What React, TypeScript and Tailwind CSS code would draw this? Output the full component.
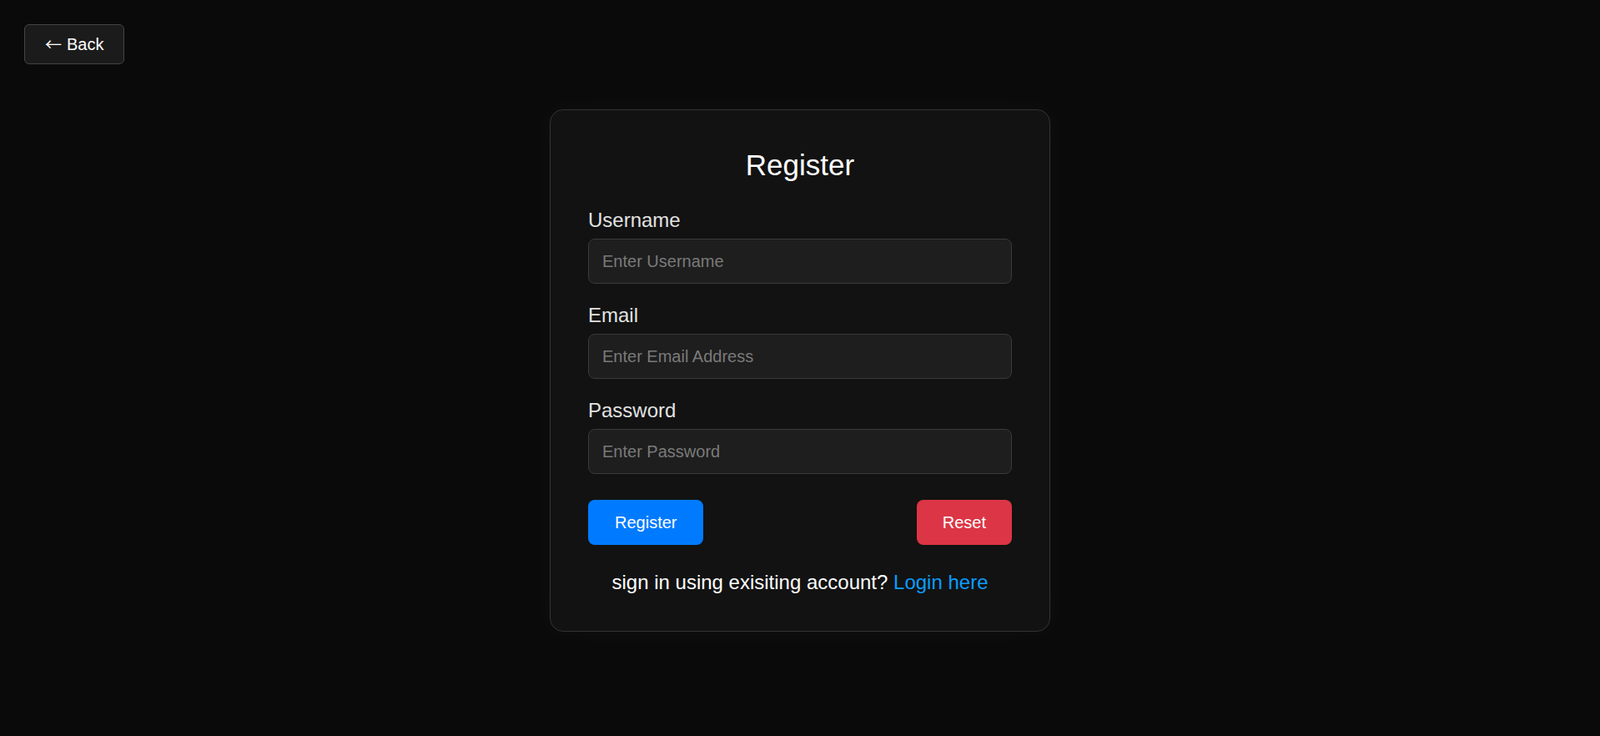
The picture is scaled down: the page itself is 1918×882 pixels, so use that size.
import { useState } from "react";

const fieldList = [
  { id: "username", label: "Username", type: "text", placeholder: "Enter Username" },
  { id: "email", label: "Email", type: "email", placeholder: "Enter Email Address" },
  { id: "password", label: "Password", type: "password", placeholder: "Enter Password" },
];

export default function App() {
  const [values, setValues] = useState<Record<string, string>>({ username: "", email: "", password: "" });

  const reset = () => setValues({ username: "", email: "", password: "" });

  return (
    <div className="relative min-h-screen w-full bg-[#0a0a0a] flex items-center justify-center pt-[6px] font-['Liberation_Sans',Arial,sans-serif]">
      <button
        type="button"
        className="absolute left-[29px] top-[29px] h-[48px] px-6 rounded-[6px] border border-[#444] bg-[#1b1b1b] text-white text-[20px] leading-[23px] flex items-center"
      >
        <span className="font-['Noto_Sans_CJK_SC',sans-serif] text-[20px] leading-[20px]">←</span>
        <span className="ml-[6px]">Back</span>
      </button>

      <div className="w-[600px] rounded-[16px] border border-[#333] bg-[#121212] p-[45px] shadow-[0_0_30px_rgba(255,255,255,0.035)]">
        <h2 className="text-center text-white text-[35px] leading-[40px] mt-[1px] mb-[32px]">Register</h2>

        <form onSubmit={(e) => e.preventDefault()} className="flex flex-col">
          {fieldList.map((f, i) => (
            <div key={f.id} className={i < fieldList.length - 1 ? "mb-[24px]" : ""}>
              <label htmlFor={f.id} className="block text-[24px] leading-[28px] text-[#e2e2e2] mb-[8px]">
                {f.label}
              </label>
              <input
                id={f.id}
                type={f.type}
                value={values[f.id]}
                onChange={(e) => setValues({ ...values, [f.id]: e.target.value })}
                placeholder={f.placeholder}
                className="block w-full h-[54px] px-4 rounded-[8px] border border-[#3a3a3a] bg-[#1e1e1e] text-[20px] text-white placeholder:text-[#7a7a7a] outline-none"
              />
            </div>
          ))}

          <div className="flex items-center justify-between mt-[31px]">
            <button type="submit" className="h-[54px] px-8 rounded-[8px] bg-[#007bff] text-white text-[20px]">
              Register
            </button>
            <button type="button" onClick={reset} className="h-[54px] px-[31px] rounded-[8px] bg-[#dc3545] text-white text-[20px]">
              Reset
            </button>
          </div>
        </form>

        <p className="mt-[31px] mb-[-1px] text-center text-white text-[24px] leading-[28px]">
          sign in using exisiting account? <a href="#" className="text-[#0a9dff]">Login here</a>
        </p>
      </div>
    </div>
  );
}
